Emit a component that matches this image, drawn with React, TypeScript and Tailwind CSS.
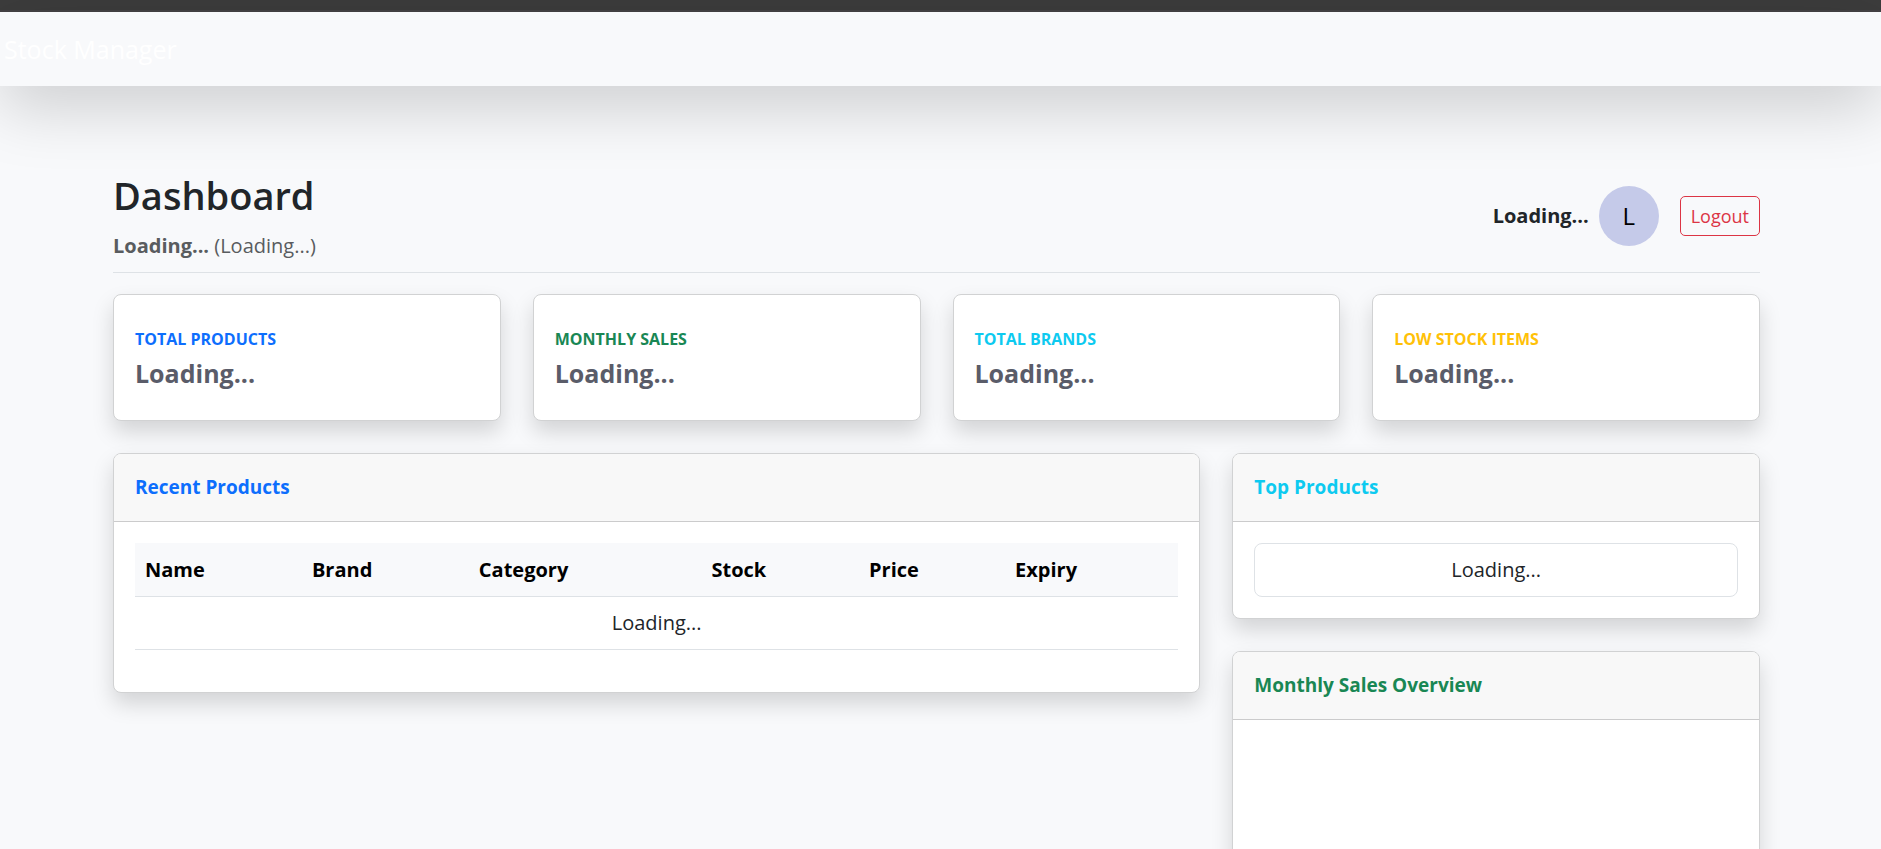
import type { ReactNode } from "react";

const stats = [
  { label: "TOTAL PRODUCTS", color: "text-[#0d6efd]" },
  { label: "MONTHLY SALES", color: "text-[#198754]" },
  { label: "TOTAL BRANDS", color: "text-[#0dcaf0]" },
  { label: "LOW STOCK ITEMS", color: "text-[#ffc107]" },
];

const columns = [
  { name: "Name", width: "w-[16%]" },
  { name: "Brand", width: "w-[16%]" },
  { name: "Category", width: "w-[22.3%]" },
  { name: "Stock", width: "w-[15.1%]" },
  { name: "Price", width: "w-[14%]" },
  { name: "Expiry", width: "w-[16.6%]" },
];

function Card({ children }: { children: ReactNode }) {
  return (
    <section className="rounded-lg border border-[#d1d2d3] bg-white shadow-[0_11px_21px_rgba(0,0,0,0.15)]">
      {children}
    </section>
  );
}

function CardTitle({ color, children }: { color: string; children: ReactNode }) {
  return (
    <header className="rounded-t-[7px] border-b border-[#cbcbcc] bg-[#f8f8f8] px-[21px] py-[21px]">
      <h2 className={`text-[19px] leading-[25px] font-bold ${color}`}>{children}</h2>
    </header>
  );
}

export default function App() {
  return (
    <div className="h-screen overflow-x-hidden overflow-y-auto bg-[#f8f9fb] font-['Open_Sans','Noto_Sans',sans-serif] text-[20px] leading-8 text-[#212529] [scrollbar-width:none]">
      <div className="h-3 border-b-2 border-[#444244] bg-[#3c3c3c]" />
      <nav className="flex h-[74px] items-center bg-[#f8f9fb] px-1 shadow-[0_21px_64px_rgba(0,0,0,0.175)]">
        <a href="#" className="text-[25px] leading-8 text-white">
          Stock Manager
        </a>
      </nav>

      <main className="pt-[84px] pr-[121px] pb-8 pl-[113px]">
        <div className="mb-[21px] flex items-center justify-between border-b border-[#dee2e6] pb-2.5">
          <div>
            <h1 className="mb-[9px] text-[38px] leading-[51px] font-semibold">Dashboard</h1>
            <p className="text-[#595c5f]">
              <strong className="font-bold">Loading...</strong> (Loading...)
            </p>
          </div>
          <div className="flex items-center">
            <strong className="mr-2.5 font-bold">Loading...</strong>
            <span className="mr-[21px] flex size-[60px] items-center justify-center rounded-full bg-[#c5cae9] text-[24px] text-black">
              L
            </span>
            <button
              type="button"
              className="h-10 rounded-[5px] border border-[#dc3545] px-2.5 text-[18px] leading-7 text-[#dc3545]"
            >
              Logout
            </button>
          </div>
        </div>

        <div className="mb-8 grid grid-cols-4 gap-8">
          {stats.map((stat) => (
            <Card key={stat.label}>
              <div className="px-[21px] py-[31px]">
                <h2 className={`mb-[5px] text-[16px] leading-[26px] font-bold ${stat.color}`}>{stat.label}</h2>
                <p className="text-[25px] leading-8 font-bold text-[#5a5c69]">Loading...</p>
              </div>
            </Card>
          ))}
        </div>

        <div className="grid grid-cols-3 items-start gap-8">
          <div className="col-span-2">
            <Card>
              <CardTitle color="text-[#0d6efd]">Recent Products</CardTitle>
              <div className="px-[21px] pt-[21px] pb-[42px]">
                <table className="w-full table-fixed border-collapse">
                  <thead>
                    <tr className="border-b border-[#dee2e6] bg-[#f8f9fb] text-left text-black">
                      {columns.map((column) => (
                        <th key={column.name} className={`px-2.5 pt-[11px] pb-2.5 font-bold ${column.width}`}>
                          {column.name}
                        </th>
                      ))}
                    </tr>
                  </thead>
                  <tbody>
                    <tr className="border-b border-[#dee2e6]">
                      <td colSpan={6} className="px-2.5 py-2.5 text-center">
                        Loading...
                      </td>
                    </tr>
                  </tbody>
                </table>
              </div>
            </Card>
          </div>

          <div className="flex flex-col gap-8">
            <Card>
              <CardTitle color="text-[#0dcaf0]">Top Products</CardTitle>
              <div className="p-[21px]">
                <ul>
                  <li className="rounded-lg border border-[#dee2e6] px-[21px] py-2.5 text-center">Loading...</li>
                </ul>
              </div>
            </Card>
            <Card>
              <CardTitle color="text-[#198754]">Monthly Sales Overview</CardTitle>
              <div className="h-80" />
            </Card>
          </div>
        </div>
      </main>
    </div>
  );
}
